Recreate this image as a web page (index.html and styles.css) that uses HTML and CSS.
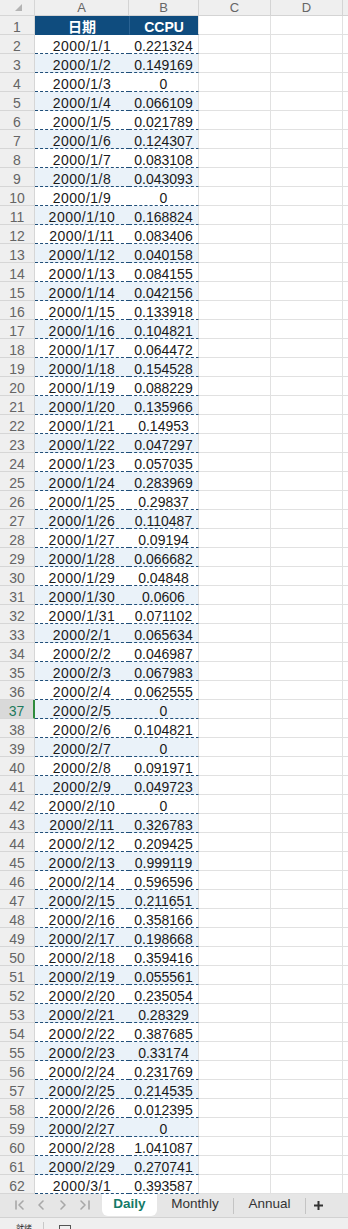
FILE: index.html
```html
<!DOCTYPE html>
<html lang="zh">
<head>
<meta charset="utf-8">
<title>Daily</title>
<link rel="stylesheet" href="styles.css">
</head>
<body>
<div class="sheet">
  <div class="row colhead">
    <div class="h corner"><svg class="tri" width="7" height="7" viewBox="0 0 7 7"><polygon points="7,0 7,7 0,7" fill="#b4b4b4"/></svg></div>
    <div class="a">A</div><div class="b">B</div><div class="c">C</div><div class="c">D</div><div class="e"></div>
  </div>
  <div class="row title"><div class="h">1</div><div class="a">日期</div><div class="b">CCPU</div><div class="c"></div><div class="c"></div><div class="e"></div></div>
  <div class="row d"><div class="h">2</div><div class="a">2000/1/1</div><div class="b">0.221324</div><div class="c"></div><div class="c"></div><div class="e"></div></div>
  <div class="row d alt"><div class="h">3</div><div class="a">2000/1/2</div><div class="b">0.149169</div><div class="c"></div><div class="c"></div><div class="e"></div></div>
  <div class="row d"><div class="h">4</div><div class="a">2000/1/3</div><div class="b">0</div><div class="c"></div><div class="c"></div><div class="e"></div></div>
  <div class="row d alt"><div class="h">5</div><div class="a">2000/1/4</div><div class="b">0.066109</div><div class="c"></div><div class="c"></div><div class="e"></div></div>
  <div class="row d"><div class="h">6</div><div class="a">2000/1/5</div><div class="b">0.021789</div><div class="c"></div><div class="c"></div><div class="e"></div></div>
  <div class="row d alt"><div class="h">7</div><div class="a">2000/1/6</div><div class="b">0.124307</div><div class="c"></div><div class="c"></div><div class="e"></div></div>
  <div class="row d"><div class="h">8</div><div class="a">2000/1/7</div><div class="b">0.083108</div><div class="c"></div><div class="c"></div><div class="e"></div></div>
  <div class="row d alt"><div class="h">9</div><div class="a">2000/1/8</div><div class="b">0.043093</div><div class="c"></div><div class="c"></div><div class="e"></div></div>
  <div class="row d"><div class="h">10</div><div class="a">2000/1/9</div><div class="b">0</div><div class="c"></div><div class="c"></div><div class="e"></div></div>
  <div class="row d alt"><div class="h">11</div><div class="a">2000/1/10</div><div class="b">0.168824</div><div class="c"></div><div class="c"></div><div class="e"></div></div>
  <div class="row d"><div class="h">12</div><div class="a">2000/1/11</div><div class="b">0.083406</div><div class="c"></div><div class="c"></div><div class="e"></div></div>
  <div class="row d alt"><div class="h">13</div><div class="a">2000/1/12</div><div class="b">0.040158</div><div class="c"></div><div class="c"></div><div class="e"></div></div>
  <div class="row d"><div class="h">14</div><div class="a">2000/1/13</div><div class="b">0.084155</div><div class="c"></div><div class="c"></div><div class="e"></div></div>
  <div class="row d alt"><div class="h">15</div><div class="a">2000/1/14</div><div class="b">0.042156</div><div class="c"></div><div class="c"></div><div class="e"></div></div>
  <div class="row d"><div class="h">16</div><div class="a">2000/1/15</div><div class="b">0.133918</div><div class="c"></div><div class="c"></div><div class="e"></div></div>
  <div class="row d alt"><div class="h">17</div><div class="a">2000/1/16</div><div class="b">0.104821</div><div class="c"></div><div class="c"></div><div class="e"></div></div>
  <div class="row d"><div class="h">18</div><div class="a">2000/1/17</div><div class="b">0.064472</div><div class="c"></div><div class="c"></div><div class="e"></div></div>
  <div class="row d alt"><div class="h">19</div><div class="a">2000/1/18</div><div class="b">0.154528</div><div class="c"></div><div class="c"></div><div class="e"></div></div>
  <div class="row d"><div class="h">20</div><div class="a">2000/1/19</div><div class="b">0.088229</div><div class="c"></div><div class="c"></div><div class="e"></div></div>
  <div class="row d alt"><div class="h">21</div><div class="a">2000/1/20</div><div class="b">0.135966</div><div class="c"></div><div class="c"></div><div class="e"></div></div>
  <div class="row d"><div class="h">22</div><div class="a">2000/1/21</div><div class="b">0.14953</div><div class="c"></div><div class="c"></div><div class="e"></div></div>
  <div class="row d alt"><div class="h">23</div><div class="a">2000/1/22</div><div class="b">0.047297</div><div class="c"></div><div class="c"></div><div class="e"></div></div>
  <div class="row d"><div class="h">24</div><div class="a">2000/1/23</div><div class="b">0.057035</div><div class="c"></div><div class="c"></div><div class="e"></div></div>
  <div class="row d alt"><div class="h">25</div><div class="a">2000/1/24</div><div class="b">0.283969</div><div class="c"></div><div class="c"></div><div class="e"></div></div>
  <div class="row d"><div class="h">26</div><div class="a">2000/1/25</div><div class="b">0.29837</div><div class="c"></div><div class="c"></div><div class="e"></div></div>
  <div class="row d alt"><div class="h">27</div><div class="a">2000/1/26</div><div class="b">0.110487</div><div class="c"></div><div class="c"></div><div class="e"></div></div>
  <div class="row d"><div class="h">28</div><div class="a">2000/1/27</div><div class="b">0.09194</div><div class="c"></div><div class="c"></div><div class="e"></div></div>
  <div class="row d alt"><div class="h">29</div><div class="a">2000/1/28</div><div class="b">0.066682</div><div class="c"></div><div class="c"></div><div class="e"></div></div>
  <div class="row d"><div class="h">30</div><div class="a">2000/1/29</div><div class="b">0.04848</div><div class="c"></div><div class="c"></div><div class="e"></div></div>
  <div class="row d alt"><div class="h">31</div><div class="a">2000/1/30</div><div class="b">0.0606</div><div class="c"></div><div class="c"></div><div class="e"></div></div>
  <div class="row d"><div class="h">32</div><div class="a">2000/1/31</div><div class="b">0.071102</div><div class="c"></div><div class="c"></div><div class="e"></div></div>
  <div class="row d alt"><div class="h">33</div><div class="a">2000/2/1</div><div class="b">0.065634</div><div class="c"></div><div class="c"></div><div class="e"></div></div>
  <div class="row d"><div class="h">34</div><div class="a">2000/2/2</div><div class="b">0.046987</div><div class="c"></div><div class="c"></div><div class="e"></div></div>
  <div class="row d alt"><div class="h">35</div><div class="a">2000/2/3</div><div class="b">0.067983</div><div class="c"></div><div class="c"></div><div class="e"></div></div>
  <div class="row d"><div class="h">36</div><div class="a">2000/2/4</div><div class="b">0.062555</div><div class="c"></div><div class="c"></div><div class="e"></div></div>
  <div class="row d alt sel"><div class="h">37</div><div class="a">2000/2/5</div><div class="b">0</div><div class="c"></div><div class="c"></div><div class="e"></div></div>
  <div class="row d"><div class="h">38</div><div class="a">2000/2/6</div><div class="b">0.104821</div><div class="c"></div><div class="c"></div><div class="e"></div></div>
  <div class="row d alt"><div class="h">39</div><div class="a">2000/2/7</div><div class="b">0</div><div class="c"></div><div class="c"></div><div class="e"></div></div>
  <div class="row d"><div class="h">40</div><div class="a">2000/2/8</div><div class="b">0.091971</div><div class="c"></div><div class="c"></div><div class="e"></div></div>
  <div class="row d alt"><div class="h">41</div><div class="a">2000/2/9</div><div class="b">0.049723</div><div class="c"></div><div class="c"></div><div class="e"></div></div>
  <div class="row d"><div class="h">42</div><div class="a">2000/2/10</div><div class="b">0</div><div class="c"></div><div class="c"></div><div class="e"></div></div>
  <div class="row d alt"><div class="h">43</div><div class="a">2000/2/11</div><div class="b">0.326783</div><div class="c"></div><div class="c"></div><div class="e"></div></div>
  <div class="row d"><div class="h">44</div><div class="a">2000/2/12</div><div class="b">0.209425</div><div class="c"></div><div class="c"></div><div class="e"></div></div>
  <div class="row d alt"><div class="h">45</div><div class="a">2000/2/13</div><div class="b">0.999119</div><div class="c"></div><div class="c"></div><div class="e"></div></div>
  <div class="row d"><div class="h">46</div><div class="a">2000/2/14</div><div class="b">0.596596</div><div class="c"></div><div class="c"></div><div class="e"></div></div>
  <div class="row d alt"><div class="h">47</div><div class="a">2000/2/15</div><div class="b">0.211651</div><div class="c"></div><div class="c"></div><div class="e"></div></div>
  <div class="row d"><div class="h">48</div><div class="a">2000/2/16</div><div class="b">0.358166</div><div class="c"></div><div class="c"></div><div class="e"></div></div>
  <div class="row d alt"><div class="h">49</div><div class="a">2000/2/17</div><div class="b">0.198668</div><div class="c"></div><div class="c"></div><div class="e"></div></div>
  <div class="row d"><div class="h">50</div><div class="a">2000/2/18</div><div class="b">0.359416</div><div class="c"></div><div class="c"></div><div class="e"></div></div>
  <div class="row d alt"><div class="h">51</div><div class="a">2000/2/19</div><div class="b">0.055561</div><div class="c"></div><div class="c"></div><div class="e"></div></div>
  <div class="row d"><div class="h">52</div><div class="a">2000/2/20</div><div class="b">0.235054</div><div class="c"></div><div class="c"></div><div class="e"></div></div>
  <div class="row d alt"><div class="h">53</div><div class="a">2000/2/21</div><div class="b">0.28329</div><div class="c"></div><div class="c"></div><div class="e"></div></div>
  <div class="row d"><div class="h">54</div><div class="a">2000/2/22</div><div class="b">0.387685</div><div class="c"></div><div class="c"></div><div class="e"></div></div>
  <div class="row d alt"><div class="h">55</div><div class="a">2000/2/23</div><div class="b">0.33174</div><div class="c"></div><div class="c"></div><div class="e"></div></div>
  <div class="row d"><div class="h">56</div><div class="a">2000/2/24</div><div class="b">0.231769</div><div class="c"></div><div class="c"></div><div class="e"></div></div>
  <div class="row d alt"><div class="h">57</div><div class="a">2000/2/25</div><div class="b">0.214535</div><div class="c"></div><div class="c"></div><div class="e"></div></div>
  <div class="row d"><div class="h">58</div><div class="a">2000/2/26</div><div class="b">0.012395</div><div class="c"></div><div class="c"></div><div class="e"></div></div>
  <div class="row d alt"><div class="h">59</div><div class="a">2000/2/27</div><div class="b">0</div><div class="c"></div><div class="c"></div><div class="e"></div></div>
  <div class="row d"><div class="h">60</div><div class="a">2000/2/28</div><div class="b">1.041087</div><div class="c"></div><div class="c"></div><div class="e"></div></div>
  <div class="row d alt"><div class="h">61</div><div class="a">2000/2/29</div><div class="b">0.270741</div><div class="c"></div><div class="c"></div><div class="e"></div></div>
  <div class="row d"><div class="h">62</div><div class="a">2000/3/1</div><div class="b">0.393587</div><div class="c"></div><div class="c"></div><div class="e"></div></div>
</div>
<div class="tabs">
  <svg class="nav" width="102" height="23" viewBox="0 0 102 23" fill="none" stroke="#a8a8a8" stroke-width="1.6" stroke-linecap="round" stroke-linejoin="round">
    <path d="M16 7v8M23 7l-4 4 4 4"/>
    <path d="M43 7l-4 4 4 4"/>
    <path d="M61 7l4 4-4 4"/>
    <path d="M81 7l4 4-4 4M89 7v8"/>
  </svg>
  <div class="tab active">Daily</div>
  <div class="tab monthly">Monthly</div>
  <span class="sep"></span>
  <div class="tab annual">Annual</div>
  <span class="sep"></span>
  <div class="plus"><svg width="11" height="11" viewBox="0 0 11 11"><path d="M5.5 1v9M1 5.5h9" stroke="#333" stroke-width="2"/></svg></div>
</div>
<div class="status">
  <span class="ready">就绪</span>
  <span class="ssep"></span>
  <span class="box"></span>
</div>
</body>
</html>
```
FILE: styles.css
```css
* { box-sizing: border-box; margin: 0; padding: 0; }
html, body { margin: 0; background: #fff; }
body {
  width: 348px;
  height: 1229px;
  overflow: hidden;
  font-family: "Liberation Sans", Arial, "Noto Sans CJK SC", sans-serif;
}
.row { display: flex; height: 19px; }
.row > div {
  flex: none;
  height: 19px;
  border-right: 1px solid #e1e1e1;
  border-bottom: 1px solid #e1e1e1;
  font-size: 14px;
  line-height: 16px;
  padding-top: 3px;
  text-align: center;
  white-space: nowrap;
  overflow: hidden;
}
.row > .h {
  width: 35px;
  background: #efefef;
  color: #656565;
  border-color: #d6d6d6;
  font-size: 14px;
}
.row > .a { width: 94px; border-right: none; }
.row > .b { width: 70px; }
.row > .c { width: 72px; }
.row > .e { flex: 1; border-right: none; }

.colhead { height: 16px; }
.colhead > div {
  height: 16px;
  background: #efefef;
  color: #666;
  border-color: #d4d4d4;
  font-size: 13px;
  line-height: 14px;
  padding-top: 1px;
}
.colhead > .a { border-right: 1px solid #d4d4d4; }
.colhead > .corner { position: relative; }
.tri { position: absolute; left: 15px; top: 4px; }

.title > .a, .title > .b {
  background: #0f4c7e;
  color: #fff;
  font-weight: bold;
  border-bottom-color: #0f4c7e;
}
.title > .a { font-family: "Noto Sans CJK SC", sans-serif; font-size: 14px; line-height: 16px; padding-top: 2px; }
.title > .b { border-left: 1px solid #2a6394; }

.d > .a, .d > .b {
  color: #1a1a1a;
  border-bottom: 1px dashed #1f4e79;
}
.d > .a { letter-spacing: 0.5px; }
.alt > .a, .alt > .b { background: #eaf2f9; }

.sel > .h {
  background: #d9d9d9;
  color: #1f7a5c;
  border-right: 2px solid #2e8b3c;
}

.tabs {
  display: flex;
  height: 23px;
  background: #e6e6e6;
  align-items: flex-start;
}
.nav { flex: none; display: block; }
.tab {
  flex: none;
  height: 22px;
  font-size: 13.5px;
  line-height: 20px;
  color: #333;
  text-align: center;
}
.tab.active {
  width: 55px;
  background: #fff;
  border-radius: 0 0 6px 6px;
  color: #147a68;
  font-weight: bold;
}
.tab.monthly { width: 76px; }
.tab.annual { width: 71px; }
.sep {
  flex: none;
  width: 1px;
  height: 16px;
  margin-top: 4px;
  background: #c4c4c4;
}
.plus {
  flex: none;
  width: 24px;
  height: 22px;
  display: flex;
  align-items: center;
  justify-content: center;
}
.plus svg { display: block; }

.status {
  display: flex;
  align-items: flex-start;
  height: 20px;
  background: #efefef;
  border-top: 1px solid #d2d2d2;
}
.ready {
  margin-left: 16px;
  margin-top: 5px;
  font-size: 8px;
  line-height: 10px;
  color: #333;
  font-family: "Noto Sans CJK SC", sans-serif;
}
.ssep {
  width: 1px;
  height: 14px;
  margin-left: 11px;
  margin-top: 4px;
  background: #c8c8c8;
}
.box {
  width: 12px;
  height: 9px;
  margin-left: 15px;
  margin-top: 7px;
  border: 1px solid #555;
}
```
